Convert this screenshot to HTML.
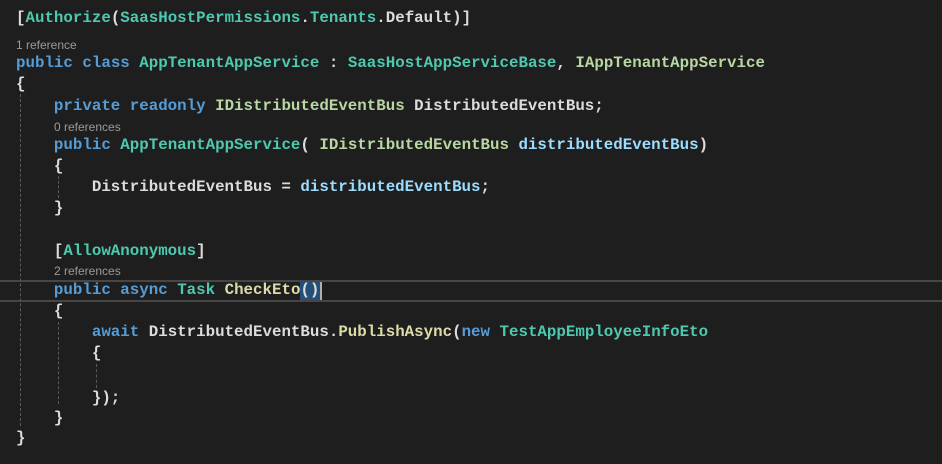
<!DOCTYPE html>
<html><head><meta charset="utf-8"><style>
html,body{margin:0;padding:0;background:#1e1e1e;width:942px;height:464px;overflow:hidden;position:relative}
.l{position:absolute;left:16px;height:20px;line-height:20px;font-family:"Liberation Mono",monospace;font-size:15.8px;color:#dcdcdc;white-space:pre;font-weight:bold}
.c{position:absolute;height:16px;line-height:16px;font-family:"Liberation Sans",sans-serif;font-size:12px;color:#9a9a9a;white-space:pre}
.k{color:#569cd6}.t{color:#4ec9b0}.m{color:#dcdcaa}.p{color:#9cdcfe}.i{color:#b8d7a3}
.g{position:absolute;width:0;border-left:1px dashed #5a5a5a}
</style></head><body>
<div style="position:absolute;left:0;right:0;top:280px;height:18px;border-top:2px solid #464646;border-bottom:2px solid #464646"></div>
<div style="position:absolute;left:300px;top:282px;width:20px;height:18px;background:#264f78"></div>
<div style="position:absolute;left:320px;top:282px;width:2px;height:18px;background:#aeafad"></div>
<div class="g" style="left:20px;top:94px;height:332px"></div>
<div class="g" style="left:58px;top:176px;height:22px"></div>
<div class="g" style="left:58px;top:322px;height:82px"></div>
<div class="g" style="left:96px;top:364px;height:24px"></div>

<div class="l" style="top:8px">[<span class="t">Authorize</span>(<span class="t">SaasHostPermissions</span>.<span class="t">Tenants</span>.Default)]</div>
<div class="c" style="left:16px;top:37px">1 reference</div>
<div class="l" style="top:53px"><span class="k">public</span> <span class="k">class</span> <span class="t">AppTenantAppService</span> : <span class="t">SaasHostAppServiceBase</span>, <span class="i">IAppTenantAppService</span></div>
<div class="l" style="top:74px">{</div>
<div class="l" style="top:96px">    <span class="k">private</span> <span class="k">readonly</span> <span class="i">IDistributedEventBus</span> DistributedEventBus;</div>
<div class="c" style="left:54px;top:119px">0 references</div>
<div class="l" style="top:135px">    <span class="k">public</span> <span class="t">AppTenantAppService</span>( <span class="i">IDistributedEventBus</span> <span class="p">distributedEventBus</span>)</div>
<div class="l" style="top:156px">    {</div>
<div class="l" style="top:177px">        DistributedEventBus = <span class="p">distributedEventBus</span>;</div>
<div class="l" style="top:198px">    }</div>
<div class="l" style="top:241px">    [<span class="t">AllowAnonymous</span>]</div>
<div class="c" style="left:54px;top:263px">2 references</div>
<div class="l" style="top:280px">    <span class="k">public</span> <span class="k">async</span> <span class="t">Task</span> <span class="m">CheckEto</span>()</div>
<div class="l" style="top:301px">    {</div>
<div class="l" style="top:322px">        <span class="k">await</span> DistributedEventBus.<span class="m">PublishAsync</span>(<span class="k">new</span> <span class="t">TestAppEmployeeInfoEto</span></div>
<div class="l" style="top:343px">        {</div>
<div class="l" style="top:388px">        });</div>
<div class="l" style="top:408px">    }</div>
<div class="l" style="top:428px">}</div>
</body></html>
